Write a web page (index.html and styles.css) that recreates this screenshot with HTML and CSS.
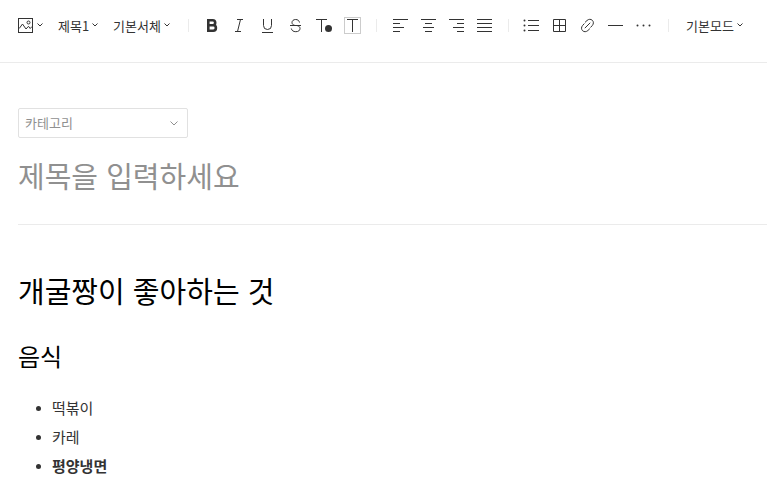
FILE: index.html
```html
<!DOCTYPE html>
<html lang="ko">
<head>
<meta charset="utf-8">
<meta name="viewport" content="width=device-width, initial-scale=1">
<title>글쓰기</title>
<link rel="stylesheet" href="styles.css">
</head>
<body>
<header class="toolbar">
  <div class="pickers">
    <button type="button" class="attach" aria-label="이미지 첨부">
      <svg width="15" height="15" viewBox="0 0 15 15"><rect x=".5" y=".5" width="14" height="14"/><path d="M1.200 10.500 4.500 6 8 11l2.500-2.700L12.200 10.500 14 8.500"/><circle cx="10.500" cy="4.500" r="1.500"/></svg>
      <svg class="chevron" width="6" height="4" viewBox="0 0 6 4"><path d="M.5.5 3 3 5.500.5"/></svg>
    </button>
    <div class="picker picker-heading">
      <select aria-label="문단 모양"><option>제목1</option><option>제목2</option><option>본문</option></select>
      <svg class="chevron" width="6" height="4" viewBox="0 0 6 4"><path d="M.5.5 3 3 5.500.5"/></svg>
    </div>
    <div class="picker picker-wide">
      <select aria-label="서체"><option>기본서체</option></select>
      <svg class="chevron" width="6" height="4" viewBox="0 0 6 4"><path d="M.5.5 3 3 5.500.5"/></svg>
    </div>
  </div>
  <span class="divider"></span>
  <div class="tools">
    <button type="button" aria-label="굵게"><svg viewBox="0 0 28 20"><path stroke-width="2.600" d="M10.300 4.300h4.400a2.500 2.500 0 0 1 0 5h-4.400h4.900a2.700 2.700 0 0 1 0 5.400h-4.900z"/></svg></button>
    <button type="button" aria-label="기울임"><svg viewBox="0 0 28 20"><path d="M11 3.500h6M9 15.500h6M14.500 3.500l-3 12"/></svg></button>
    <button type="button" aria-label="밑줄"><svg viewBox="0 0 28 20"><path d="M9.500 3v6.500a4 4 0 0 0 8 0V3M8 16.500h11"/></svg></button>
    <button type="button" aria-label="취소선"><svg viewBox="0 0 28 20"><path d="M17.500 6.500C17 4.500 15.800 3.500 13.700 3.500 11.400 3.500 10 4.800 10 6.600 10 8 11 9 13 9.500M15 9.500c2 .5 3 1.500 3 3 0 2-1.600 3.200-4.200 3.200S9.800 14.500 9.300 12.500M8 9.500h11"/></svg></button>
    <button type="button" aria-label="글자색"><svg viewBox="0 0 28 20"><path d="M6 3.500h11M11.500 3v13"/><circle class="solid" cx="18.500" cy="12.500" r="3.500"/></svg></button>
    <button type="button" aria-label="글자 배경색"><svg viewBox="0 0 28 20"><rect class="frame" x="6.500" y="1.500" width="16" height="16"/><path d="M9 3.500h11M14.500 3v13"/></svg></button>
  </div>
  <span class="divider"></span>
  <div class="tools">
    <button type="button" aria-label="왼쪽 정렬"><svg viewBox="0 0 28 20"><path d="M7 3.500h15M7 7.500h7M7 11.500h11M7 15.500h7"/></svg></button>
    <button type="button" aria-label="가운데 정렬"><svg viewBox="0 0 28 20"><path d="M7 3.500h15M11 7.500h7M9 11.500h11M11 15.500h7"/></svg></button>
    <button type="button" aria-label="오른쪽 정렬"><svg viewBox="0 0 28 20"><path d="M7 3.500h15M15 7.500h7M11 11.500h11M15 15.500h7"/></svg></button>
    <button type="button" aria-label="양쪽 정렬"><svg viewBox="0 0 28 20"><path d="M7 3.500h15M7 7.500h15M7 11.500h15M7 15.500h15"/></svg></button>
  </div>
  <span class="divider"></span>
  <div class="tools">
    <button type="button" aria-label="목록"><svg viewBox="0 0 28 20"><path d="M10 4.500h11M10 9.500h11M10 14.500h11"/><g class="solid"><circle cx="6.500" cy="4.500" r="1"/><circle cx="6.500" cy="9.500" r="1"/><circle cx="6.500" cy="14.500" r="1"/></g></svg></button>
    <button type="button" aria-label="표"><svg viewBox="0 0 28 20"><path d="M7.500 3.500h12v12h-12zM13.500 3.500v12M7.500 9.500h12"/></svg></button>
    <button type="button" aria-label="링크"><svg viewBox="0 0 28 20"><path d="M10.800 12.200l5.400-5.400M11 6.400l2-1.900c1.700-1.500 3.800-1.600 5.300-.2s1.400 3.600 0 5.200l-1.800 2M10.400 7.500l-1.800 2c-1.400 1.600-1.500 3.800 0 5.200s3.600 1.300 5.300-.2l2-1.900"/></svg></button>
    <button type="button" aria-label="구분선"><svg viewBox="0 0 28 20"><path d="M6 9.500h15"/></svg></button>
    <button type="button" aria-label="더보기"><svg viewBox="0 0 28 20"><g class="solid"><circle cx="7.500" cy="9.500" r="1"/><circle cx="13.500" cy="9.500" r="1"/><circle cx="19.500" cy="9.500" r="1"/></g></svg></button>
  </div>
  <span class="divider"></span>
  <div class="picker picker-wide picker-mode">
    <select aria-label="편집 모드"><option>기본모드</option><option>마크다운</option><option>HTML</option></select>
    <svg class="chevron" width="6" height="4" viewBox="0 0 6 4"><path d="M.5.5 3 3 5.500.5"/></svg>
  </div>
</header>
<main class="editor">
  <div class="category">
    <select aria-label="카테고리"><option>카테고리</option></select>
    <svg class="chevron" width="8" height="5" viewBox="0 0 8 5"><path d="M.5.5 4 4 7.500.5"/></svg>
  </div>
  <input class="title" type="text" placeholder="제목을 입력하세요" aria-label="제목">
  <article class="content">
    <h1>개굴짱이 좋아하는 것</h1>
    <h2>음식</h2>
    <ul>
      <li>떡볶이</li>
      <li>카레</li>
      <li><strong>평양냉면</strong></li>
    </ul>
  </article>
</main>
</body>
</html>
```
FILE: styles.css
```css
* {
  box-sizing: border-box;
}

body {
  margin: 0;
  background: #fff;
  color: #333;
  font-family: "Noto Sans CJK KR", sans-serif;
  overflow-x: hidden;
}

button,
select,
input {
  margin: 0;
  padding: 0;
  border: 0;
  background: transparent;
  color: inherit;
  font: inherit;
}

select {
  appearance: none;
  width: 100%;
}

svg {
  display: block;
  flex: none;
  fill: none;
  stroke: #333;
}

.toolbar {
  display: flex;
  align-items: flex-start;
  padding: 16px 18px 26px;
  border-bottom: 1px solid #ebebeb;
  font-size: 13px;
  line-height: 20px;
}

.pickers {
  display: flex;
  gap: 15px;
  margin-right: 8px;
}

.attach {
  display: flex;
  align-items: flex-start;
  gap: 4px;
  height: 20px;
  padding-top: 2px;
}

.attach .chevron {
  margin-top: 5px;
}

.picker {
  position: relative;
  flex: none;
  height: 20px;
}

.picker select {
  display: block;
  height: 18px;
}

.picker .chevron {
  position: absolute;
  top: 7px;
  right: 0;
  pointer-events: none;
}

.picker-heading {
  width: 40px;
}

.picker-wide {
  width: 57px;
}

.picker-mode {
  margin-left: 8px;
}

.divider {
  flex: none;
  width: 1px;
  height: 13px;
  margin: 3px 9px 0 10px;
  background: #ebebeb;
}

.tools {
  display: flex;
}

.tools svg {
  width: 28px;
  height: 20px;
}

.solid {
  fill: #333;
  stroke: none;
}

.frame {
  stroke: #ccc;
}

.editor {
  padding: 45px 0 0 18px;
}

.category {
  position: relative;
  width: 170px;
  color: #909090;
  font-size: 13px;
}

.category select {
  display: block;
  height: 30px;
  padding: 0 6px 2px;
  border: 1px solid #e1e1e1;
  border-radius: 2px;
}

.category .chevron {
  position: absolute;
  top: 13px;
  right: 10px;
  stroke: #909090;
  pointer-events: none;
}

.title {
  display: block;
  width: 100%;
  height: 87px;
  padding: 0 0 12px;
  border-bottom: 1px solid #ebebeb;
  outline: 0;
  font-size: 29px;
}

.title::placeholder {
  color: #909090;
  opacity: 1;
}

.content {
  padding-top: 43px;
  font-size: 15px;
  line-height: 29px;
}

h1,
h2 {
  margin: 0;
  color: #000;
  font-weight: 400;
}

h1 {
  font-size: 29px;
  line-height: 44px;
}

h2 {
  margin-top: 26px;
  font-size: 24px;
  line-height: 36px;
}

ul {
  margin: 19px 0 0;
  padding-left: 18px;
  list-style: none;
}

li {
  display: flex;
  align-items: center;
  gap: 11px;
}

li::before {
  content: "";
  width: 5px;
  height: 5px;
  margin-top: 2px;
  border-radius: 50%;
  background: #333;
}
```
